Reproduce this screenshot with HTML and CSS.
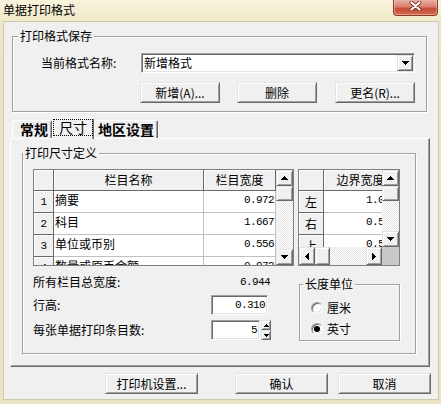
FILE: index.html
```html
<!DOCTYPE html>
<html lang="zh-CN">
<head>
<meta charset="utf-8">
<title>单据打印格式</title>
<link rel="stylesheet" href="styles.css">
</head>
<body>
<div class="window">
  <div class="titlebar">
    <span class="title">单据打印格式</span>
    <span class="close">
      <svg width="13" height="10" viewBox="0 0 13 10"><path d="M2.5 1.5L10.5 8.5M10.5 1.5L2.5 8.5" stroke="#7a2a1e" stroke-width="3.8" stroke-linecap="round"/><path d="M2.5 1.5L10.5 8.5M10.5 1.5L2.5 8.5" stroke="#fff" stroke-width="2.2" stroke-linecap="round"/></svg>
    </span>
  </div>
  <div class="client">
    <div class="group g-save">
      <div class="legend">打印格式保存</div>
      <div class="row-name">
        <span class="lbl-name">当前格式名称:</span>
        <div class="sunken combo">
          <span class="combo-text">新增格式</span>
          <span class="raised combo-btn"><svg width="7" height="4" viewBox="0 0 7 4"><path d="M0 0h7v1H0zM1 1h5v1H1zM2 2h3v1H2zM3 3h1v1H3z"/></svg></span>
        </div>
      </div>
      <div class="row-btns">
        <button class="raised btn b-new">新增(A)...</button>
        <button class="raised btn b-del">删除</button>
        <button class="raised btn b-ren">更名(R)...</button>
      </div>
    </div>

    <div class="tabs">
      <div class="tab t-gen">常规</div>
      <div class="tab sel"><span class="focus">尺寸</span></div>
      <div class="tab t-reg">地区设置</div>
    </div>
    <div class="panel">
      <div class="group g-size">
        <div class="legend">打印尺寸定义</div>
        <div class="grids">
          <div class="grid g1">
            <div class="gview">
              <div class="gtable t1">
                <div class="hc"></div><div class="hc">栏目名称</div><div class="hc">栏目宽度</div>
                <div class="rh num">1</div><div class="dc">摘要</div><div class="dc r num">0.972</div>
                <div class="rh num">2</div><div class="dc">科目</div><div class="dc r num">1.667</div>
                <div class="rh num">3</div><div class="dc">单位或币别</div><div class="dc r num">0.556</div>
                <div class="rh num">4</div><div class="dc">数量或原币金额</div><div class="dc r num">0.972</div>
              </div>
            </div>
            <div class="vscroll">
              <span class="raised sb"><svg width="7" height="4" viewBox="0 0 7 4"><path d="M3 0h1v1H3zM2 1h3v1H2zM1 2h5v1H1zM0 3h7v1H0z"/></svg></span>
              <span class="raised thumb"></span>
              <span class="track"></span>
              <span class="raised sb"><svg width="7" height="4" viewBox="0 0 7 4"><path d="M0 0h7v1H0zM1 1h5v1H1zM2 2h3v1H2zM3 3h1v1H3z"/></svg></span>
            </div>
          </div>
          <div class="grid g2">
            <div class="g2main">
              <div class="gview">
                <div class="gtable t2">
                  <div class="hc"></div><div class="hc">边界宽度</div>
                  <div class="rh">左</div><div class="dc r num">1.000</div>
                  <div class="rh">右</div><div class="dc r num">0.500</div>
                  <div class="rh">上</div><div class="dc r num">0.500</div>
                  <div class="rh">下</div><div class="dc r num">0.500</div>
                </div>
              </div>
              <div class="hscroll">
                <span class="raised hb"><svg width="4" height="7" viewBox="0 0 4 7"><path d="M0 3h1v1H0zM1 2h1v3H1zM2 1h1v5H2zM3 0h1v7H3z"/></svg></span>
                <span class="raised hthumb"></span>
                <span class="track"></span>
                <span class="raised hb"><svg width="4" height="7" viewBox="0 0 4 7"><path d="M0 0h1v7H0zM1 1h1v5H1zM2 2h1v3H2zM3 3h1v1H3z"/></svg></span>
              </div>
            </div>
            <div class="vcol">
              <div class="vscroll">
                <span class="raised sb"><svg width="7" height="4" viewBox="0 0 7 4"><path d="M3 0h1v1H3zM2 1h3v1H2zM1 2h5v1H1zM0 3h7v1H0z"/></svg></span>
                <span class="raised thumb"></span>
                <span class="track"></span>
                <span class="raised sb"><svg width="7" height="4" viewBox="0 0 7 4"><path d="M0 0h7v1H0zM1 1h5v1H1zM2 2h3v1H2zM3 3h1v1H3z"/></svg></span>
              </div>
              <div class="corner"></div>
            </div>
          </div>
        </div>

        <div class="lower">
          <div class="fields">
            <div class="frow fa">
              <span class="flbl">所有栏目总宽度:</span>
              <span class="fval num">6.944</span>
            </div>
            <div class="frow fb">
              <span class="flbl">行高:</span>
              <span class="sunken inp inp-h num">0.310</span>
            </div>
            <div class="frow fc">
              <span class="flbl">每张单据打印条目数:</span>
              <span class="sunken inp inp-n num">5</span>
              <span class="spin">
                <span class="raised sp"><svg width="5" height="3" viewBox="0 0 5 3"><path d="M2 0h1v1H2zM1 1h3v1H1zM0 2h5v1H0z"/></svg></span>
                <span class="raised sp"><svg width="5" height="3" viewBox="0 0 5 3"><path d="M0 0h5v1H0zM1 1h3v1H1zM2 2h1v1H2z"/></svg></span>
              </span>
            </div>
          </div>
          <div class="group g-unit">
            <div class="legend">长度单位</div>
            <div class="radio r1"><span class="rc"></span><span class="rl">厘米</span></div>
            <div class="radio r2"><span class="rc"><i class="dot"></i></span><span class="rl">英寸</span></div>
          </div>
        </div>
      </div>
    </div>

    <div class="footer">
      <button class="raised btn fbtn">打印机设置...</button>
      <button class="raised btn fbtn f-ok">确认</button>
      <button class="raised btn fbtn f-cancel">取消</button>
    </div>
  </div>
</div>
</body>
</html>
```

FILE: styles.css
```css
body {
  margin: 0;
  width: 441px;
  height: 404px;
  overflow: hidden;
  font-family: "Noto Sans CJK SC", "Noto Sans CJK JP", sans-serif;
  font-size: 12px;
  line-height: 14px;
  color: #000;
  background: #ece5c3;
}

.window {
  display: flex;
  flex-direction: column;
  width: 441px;
  height: 404px;
  background: linear-gradient(#f7f3dc 0, #efe8c8 22px, #ece5c3 60px, #ebe4c2 100%);
}

/* ---------- title bar ---------- */
.titlebar {
  flex: none;
  height: 22px;
  display: flex;
  align-items: flex-start;
}
.title {
  padding: 2px 0 0 3px;
  line-height: 16px;
}
.close {
  margin-left: auto;
  margin-right: 3px;
  width: 45px;
  height: 16px;
  box-sizing: border-box;
  border: 1px solid #8e3b2c;
  border-top: 0;
  border-radius: 0 0 4px 4px;
  background: linear-gradient(#eab2a3, #da7d6d 45%, #c64b34 58%, #d36c52);
  box-shadow: inset 0 -1px rgba(255,255,255,.35), inset 1px 0 rgba(255,255,255,.3), inset -1px 0 rgba(255,255,255,.3);
  display: flex;
  justify-content: center;
  padding-top: 1px;
}

/* ---------- client area ---------- */
.client {
  flex: 1;
  margin: 0 3px 5px 4px;
  background: #f0f0f0;
  display: flow-root;
  box-shadow: 0 0 0 1px #cfc9a8;
}

.raised {
  box-sizing: border-box;
  background: #f0f0f0;
  border: 1px solid;
  border-color: #e3e3e3 #696969 #696969 #e3e3e3;
  box-shadow: inset 1px 1px #fff, inset -1px -1px #a0a0a0;
}
.sunken {
  box-sizing: border-box;
  background: #fff;
  border: 1px solid;
  border-color: #a0a0a0 #fff #fff #a0a0a0;
  box-shadow: inset 1px 1px #696969, inset -1px -1px #e3e3e3;
}

.group {
  box-sizing: border-box;
  border: 1px solid #a0a0a0;
  box-shadow: inset 1px 1px #fff, 1px 1px #fff;
}
.legend {
  display: table;
  height: 14px;
  line-height: 14px;
  margin-top: -8px;
  padding: 0 2px;
  background: #f0f0f0;
}

.btn {
  margin: 0;
  padding: 0;
  font: inherit;
  color: #000;
  height: 21px;
  line-height: 14px;
  appearance: none;
}

/* ---------- group: 打印格式保存 ---------- */
.g-save {
  margin: 14px 0 0 8px;
  width: 415px;
  padding-bottom: 8px;
}
.g-save .legend { margin-left: 5px; }
.row-name {
  display: flex;
  align-items: center;
  height: 20px;
  margin-top: 10px;
}
.lbl-name {
  margin-left: 28px;
  width: 100px;
}
.combo {
  width: 274px;
  height: 20px;
  padding: 1px;
  display: flex;
  align-items: center;
}
.combo-text {
  flex: 1;
  padding-left: 1px;
  line-height: 16px;
}
.combo-btn {
  width: 16px;
  height: 16px;
  display: flex;
  align-items: center;
  justify-content: center;
}
.row-btns {
  display: flex;
  margin: 9px 0 0 127px;
}
.b-new { width: 80px; }
.b-del { width: 80px; margin-left: 17px; }
.b-ren { width: 80px; margin-left: 18px; }

/* ---------- tabs ---------- */
.tabs {
  position: relative;
  z-index: 1;
  display: flex;
  align-items: flex-end;
  height: 20px;
  margin: 6px 0 0 8px;
}
.tab {
  box-sizing: border-box;
  height: 18px;
  border: 1px solid;
  border-color: #fff #696969 transparent #fff;
  border-bottom: 0;
  border-radius: 2px 2px 0 0;
  box-shadow: inset -1px 0 #a0a0a0;
  background: #f0f0f0;
  font-size: 14px;
  line-height: 16px;
  display: flex;
  justify-content: center;
}
.t-gen { width: 40px; font-weight: bold; padding-left: 4px; }
.t-reg { width: 64px; font-weight: bold; }
.tab.sel {
  width: 42px;
  height: 21px;
  margin-bottom: -1px;
}
.focus {
  box-sizing: border-box;
  width: 100%;
  height: 17px;
  border: 1px dotted #000;
  text-align: center;
  line-height: 15px;
}

.panel {
  box-sizing: border-box;
  margin-left: 6px;
  width: 420px;
  border: 1px solid;
  border-color: #fff #696969 #696969 #fff;
  box-shadow: inset -1px -1px #a0a0a0;
  padding-bottom: 12px;
  display: flow-root;
}

/* ---------- group: 打印尺寸定义 ---------- */
.g-size {
  margin: 14px 0 0 11px;
  width: 394px;
  padding-bottom: 12px;
}
.grids {
  display: flex;
  margin: 9px 0 0 10px;
}
.grid {
  box-sizing: border-box;
  height: 97px;
  border: 1px solid #7f7f7f;
  display: flex;
  background: #fff;
}
.g1 { width: 261px; }
.g2 { width: 102px; margin-left: 4px; }
.gview { overflow: hidden; }
.g1 .gview { width: 242px; }
.g2main { width: 83px; display: flex; flex-direction: column; }
.g2 .gview { height: 77px; }

.gtable { display: grid; }
.t1 { grid-template-columns: 20px 150px 72px; grid-template-rows: 21px repeat(4, 22px); }
.t2 { grid-template-columns: 25px 74px; grid-template-rows: 21px repeat(4, 22px); }
.gtable > div {
  box-sizing: border-box;
  overflow: hidden;
  white-space: nowrap;
}
.hc, .rh {
  background: #f0f0f0;
  border-right: 1px solid #696969;
  border-bottom: 1px solid #696969;
  box-shadow: inset 1px 1px #fff;
  display: flex;
  align-items: center;
  justify-content: center;
}
.dc {
  background: #fff;
  border-right: 1px solid #c0c0c0;
  border-bottom: 1px solid #c0c0c0;
  line-height: 18px;
  padding-left: 1px;
}
.dc.r {
  text-align: right;
  padding: 0 1px 0 0;
}
.num {
  font-family: "Liberation Mono", monospace;
  font-size: 11px;
  letter-spacing: -0.6px;
}

.track {
  flex: 1;
}
.vscroll {
  width: 17px;
  display: flex;
  flex-direction: column;
  background: repeating-conic-gradient(#fff 0 25%, #e4e4e4 0 50%) 0 0 / 2px 2px;
}
.sb {
  height: 16px;
  display: flex;
  align-items: center;
  justify-content: center;
}
.thumb { height: 15px; }
.vcol { width: 17px; display: flex; flex-direction: column; }
.vcol .vscroll { height: 77px; }
.corner { height: 18px; background: #c8c8c8; }
.hscroll {
  height: 18px;
  display: flex;
  background: repeating-conic-gradient(#fff 0 25%, #e4e4e4 0 50%) 0 0 / 2px 2px;
}
.hb {
  width: 16px;
  display: flex;
  align-items: center;
  justify-content: center;
}
.hthumb { width: 15px; }

/* ---------- lower fields ---------- */
.lower {
  display: flex;
  align-items: flex-start;
}
.fields {
  margin-left: 10px;
  width: 238px;
}
.frow {
  display: flex;
  align-items: center;
  height: 20px;
}
.fa { margin-top: 6px; }
.fb { margin-top: 3px; }
.fc { margin-top: 5px; }
.flbl { width: 178px; }
.fval {
  width: 59px;
  text-align: right;
}
.inp {
  height: 20px;
  line-height: 18px;
  text-align: right;
  padding-right: 2px;
}
.inp-h { width: 57px; }
.inp-n { width: 49px; }
.spin {
  display: flex;
  flex-direction: column;
  width: 10px;
  height: 20px;
  margin-left: 1px;
}
.sp {
  height: 10px;
  display: flex;
  align-items: center;
  justify-content: center;
}

/* ---------- group: 长度单位 ---------- */
.g-unit {
  margin: 18px 0 0 28px;
  width: 101px;
  padding-bottom: 3px;
}
.g-unit .legend { margin-left: 3px; }
.radio {
  display: flex;
  align-items: center;
  height: 16px;
  margin-left: 11px;
}
.r1 { margin-top: 9px; }
.r2 { margin-top: 5px; }
.rc {
  box-sizing: border-box;
  width: 12px;
  height: 12px;
  border-radius: 50%;
  border: 1px solid;
  border-color: #a0a0a0 #fff #fff #a0a0a0;
  box-shadow: inset 1px 1px #696969, inset -1px -1px #e3e3e3;
  background: #fff;
  display: flex;
  align-items: center;
  justify-content: center;
}
.dot {
  width: 6px;
  height: 6px;
  border-radius: 50%;
  background: #000;
}
.rl { margin-left: 4px; }

/* ---------- footer ---------- */
.footer {
  display: flex;
  margin: 6px 0 0 101px;
}
.fbtn { width: 93px; }
.f-ok { margin-left: 37px; }
.f-cancel { margin-left: 10px; }
```
